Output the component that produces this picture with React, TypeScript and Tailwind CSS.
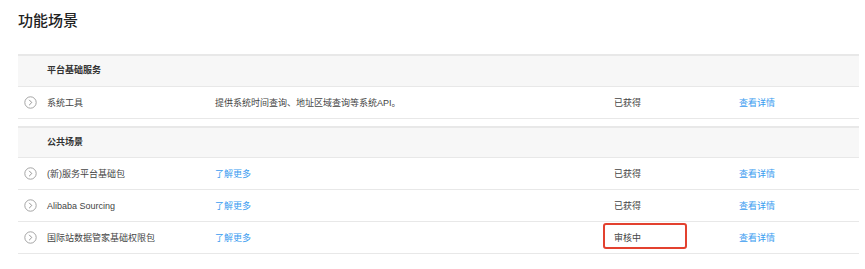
import React from "react"

interface Row {
	name: string
	desc?: string
	descLink?: string
	status: string
	action: string
	highlight?: boolean
}

interface Section {
	title: string
	rows: Row[]
}

const sections: Section[] = [
	{
		title: "平台基础服务",
		rows: [{ name: "系统工具", desc: "提供系统时间查询、地址区域查询等系统API。", status: "已获得", action: "查看详情" }],
	},
	{
		title: "公共场景",
		rows: [
			{ name: "(新)服务平台基础包", descLink: "了解更多", status: "已获得", action: "查看详情" },
			{ name: "Alibaba Sourcing", descLink: "了解更多", status: "已获得", action: "查看详情" },
			{ name: "国际站数据管家基础权限包", descLink: "了解更多", status: "审核中", action: "查看详情", highlight: true },
		],
	},
]

const font = { fontFamily: '"Liberation Sans", "Noto Sans CJK SC", sans-serif' }

const ExpandIcon = () => (
	<svg width="13" height="13" viewBox="0 0 13 13" fill="none" className="block">
		<circle cx="6.5" cy="6.5" r="5.7" stroke="#9a9a9a" strokeWidth="0.9" />
		<path d="M5.4 4.1 L7.8 6.5 L5.4 8.9" stroke="#8a8a8a" strokeWidth="0.9" strokeLinecap="round" strokeLinejoin="round" />
	</svg>
)

const cols = "grid grid-cols-[29px_168px_399px_125px_1fr] items-center"

const App: React.FC = () => {
	return (
		<div className="w-[865px] h-[269px] bg-white pl-[18px] pr-[6px] pt-[10px] text-[#333]" style={font}>
			<h1 className="text-[15px] leading-[22px] font-medium text-[#222] mb-[22px]">功能场景</h1>

			{sections.map((section, si) => (
				<div key={section.title} className={si > 0 ? "mt-[7px]" : ""}>
					<div className={`border-t-2 border-b border-[#e8e8e8] bg-[#f7f7f7] ${si > 0 ? "h-[32px]" : "h-[33px]"}`}>
						<div className={`${cols} h-full`}>
							<div />
							<div className="text-[9px] font-bold text-[#333]">{section.title}</div>
						</div>
					</div>
					{section.rows.map((row) => (
						<div key={row.name} className={`${cols} h-[32px] border-b border-[#e8e8e8] text-[9px] leading-[14px]`}>
							<div className="flex pl-[6px]">
								<ExpandIcon />
							</div>
							<div className="text-[#444]">{row.name}</div>
							<div>
								{row.desc && <span className="text-[#444]">{row.desc}</span>}
								{row.descLink && <span className="text-[#3a9cf0]">{row.descLink}</span>}
							</div>
							<div className="relative text-[#444]">
								{row.status}
								{row.highlight && (
									<span className="absolute left-[-11px] top-[-8px] w-[84px] h-[26px] border-2 border-[#e3412f] rounded-[3px]" />
								)}
							</div>
							<div className="text-[#3a9cf0]">{row.action}</div>
						</div>
					))}
				</div>
			))}
		</div>
	)
}

export default App
